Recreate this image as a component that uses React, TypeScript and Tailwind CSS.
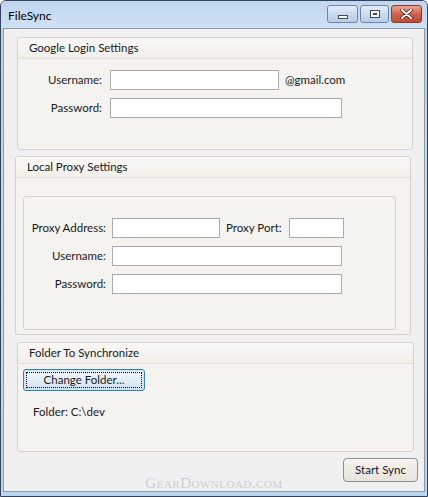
import React from "react";

const font = { fontFamily: 'Lato, "Noto Sans", "Liberation Sans", sans-serif' };

function Input({ w, h = 20 }: { w: number; h?: number }) {
  return (
    <div
      className="bg-white border border-[#abadb3] border-t-[#a3a8b0]"
      style={{ width: w, height: h }}
    />
  );
}

function GroupHeader({ title }: { title: string }) {
  return (
    <div className="h-[21px] flex items-center pl-[11px] bg-gradient-to-b from-[#f9f8f6] to-[#f1efea] border-b border-[#e3dfd8] rounded-t-[3px] text-[11.5px] text-[#1a1a1a] whitespace-nowrap">
      {title}
    </div>
  );
}

export default function App() {
  return (
    <div
      style={font}
      className="w-[428px] h-[497px] bg-gradient-to-b from-[#bcd2ea] via-[#c6daef] to-[#bcd4ec] border border-[#34435a] rounded-t-[6px] flex flex-col overflow-hidden"
    >
      {/* Title bar */}
      <div className="h-[27px] flex items-start pl-[7px] pr-[5px] shrink-0 bg-gradient-to-b from-[#c0d6ee] to-[#cfe0f3]">
        <div className="text-[12px] text-[#000] mt-[6px]">FileSync</div>
        <div className="ml-auto flex gap-[2px] mt-[4px]">
          <div className="w-[31px] h-[18px] rounded-[3px] border border-[#6d86a8] bg-gradient-to-b from-[#e4edf8] via-[#cbdbee] to-[#b8cde6] flex items-center justify-center">
            <div className="w-[10px] h-[4px] border border-[#3b4a5f] bg-white mt-[5px]" />
          </div>
          <div className="w-[29px] h-[18px] rounded-[3px] border border-[#6d86a8] bg-gradient-to-b from-[#e4edf8] via-[#cbdbee] to-[#b8cde6] flex items-center justify-center">
            <div className="w-[10px] h-[8px] border border-[#3b4a5f] bg-white flex items-center justify-center">
              <div className="w-[4px] h-[2px] border border-[#3b4a5f]" />
            </div>
          </div>
          <div className="w-[31px] h-[18px] rounded-[3px] border border-[#8a3a2c] bg-gradient-to-b from-[#e8a493] via-[#d0624a] to-[#c24a30] flex items-center justify-center">
            <svg width="13" height="10" viewBox="0 0 13 10">
              <path
                d="M2 1 L11 9 M11 1 L2 9"
                stroke="#3a1a14"
                strokeWidth="3.4"
                strokeLinecap="round"
              />
              <path
                d="M2 1 L11 9 M11 1 L2 9"
                stroke="#ffffff"
                strokeWidth="2"
                strokeLinecap="round"
              />
            </svg>
          </div>
        </div>
      </div>

      {/* Client area */}
      <div className="flex-1 mx-[2px] mb-[4px] border border-[#8a9bb0] bg-[#f0f0f0] flex flex-col relative text-[11.5px] text-[#1a1a1a] whitespace-nowrap">
        {/* Group 1 */}
        <div className="mt-[8px] ml-[13px] w-[396px] h-[113px] border border-[#d6d2cb] rounded-[3px] bg-[#f4f3f0]">
          <GroupHeader title="Google Login Settings" />
          <div className="flex flex-col gap-[8px] mt-[11px]">
            <div className="flex items-center">
              <div className="w-[84px] text-right">Username:</div>
              <div className="ml-[8px]">
                <Input w={169} />
              </div>
              <div className="ml-[6px]">@gmail.com</div>
            </div>
            <div className="flex items-center">
              <div className="w-[84px] text-right">Password:</div>
              <div className="ml-[8px]">
                <Input w={232} />
              </div>
            </div>
          </div>
        </div>

        {/* Group 2 */}
        <div className="mt-[6px] ml-[11px] w-[396px] h-[179px] border border-[#d6d2cb] rounded-[3px] bg-[#f4f3f0]">
          <GroupHeader title="Local Proxy Settings" />
          <div className="mt-[18px] ml-[7px] w-[373px] h-[134px] border border-[#d6d2cb] rounded-[3px] pt-[21px]">
            <div className="flex flex-col gap-[8px]">
              <div className="flex items-center">
                <div className="w-[82px] text-right">Proxy Address:</div>
                <div className="ml-[6px]">
                  <Input w={108} />
                </div>
                <div className="ml-[6px]">Proxy Port:</div>
                <div className="ml-[7px]">
                  <Input w={55} />
                </div>
              </div>
              <div className="flex items-center">
                <div className="w-[82px] text-right">Username:</div>
                <div className="ml-[6px]">
                  <Input w={230} />
                </div>
              </div>
              <div className="flex items-center">
                <div className="w-[82px] text-right">Password:</div>
                <div className="ml-[6px]">
                  <Input w={230} />
                </div>
              </div>
            </div>
          </div>
        </div>

        {/* Group 3 */}
        <div className="mt-[7px] ml-[13px] w-[397px] h-[110px] border border-[#d6d2cb] rounded-[3px] bg-[#f4f3f0]">
          <GroupHeader title="Folder To Synchronize" />
          <div className="ml-[5px] mt-[5px] w-[122px] h-[22px] rounded-[3px] border border-[#3c7fb1] bg-gradient-to-b from-[#f2f8fc] via-[#e3eef8] to-[#cfe2f2] p-[2px] shadow-[inset_0_0_0_1px_#c4e5f6]">
            <div className="w-full h-full border border-dotted border-[#000] flex items-center justify-center">
              Change Folder...
            </div>
          </div>
          <div className="ml-[15px] mt-[12px]">Folder: C:\dev</div>
        </div>

        {/* Start Sync */}
        <div className="flex justify-end mt-[6px] mr-[6px]">
          <div className="w-[75px] h-[24px] rounded-[4px] border border-[#8e8f8f] bg-gradient-to-b from-[#f6f4f1] to-[#e7e3dc] flex items-center justify-center">
            Start Sync
          </div>
        </div>

        {/* Watermark */}
        <div
          className="absolute bottom-[-3px] left-0 right-0 text-center text-[15px] text-[#c8cfd6] tracking-[0.5px] pointer-events-none"
          style={{ fontFamily: '"Liberation Serif", serif', fontVariant: "small-caps" }}
        >
          GearDownload.com
        </div>
      </div>
    </div>
  );
}
